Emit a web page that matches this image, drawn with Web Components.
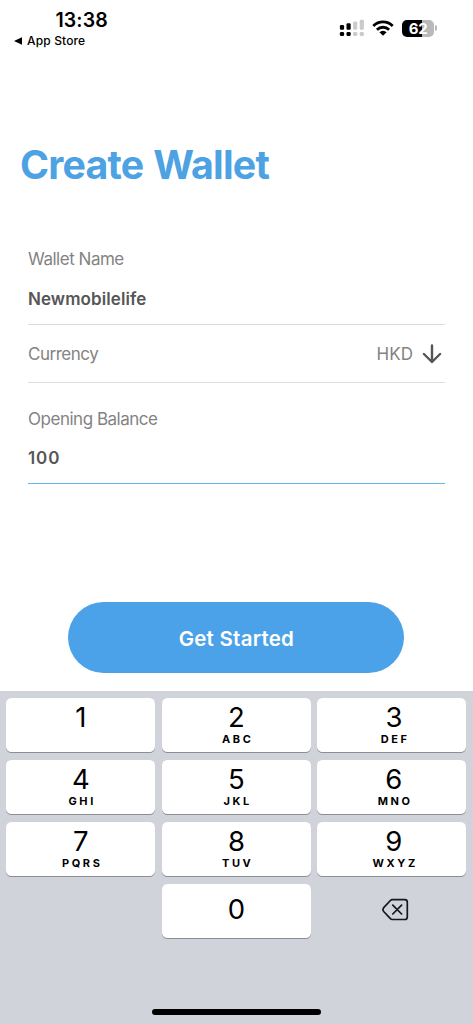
<!DOCTYPE html>
<html lang="en">
<head>
<meta charset="utf-8">
<title>Create Wallet</title>
<style>
html,body{margin:0;padding:0;background:#fff}
body{font-family:Inter,"Liberation Sans",sans-serif;width:473px;height:1024px;overflow:hidden}
</style>
</head>
<body>
<wallet-screen></wallet-screen>
<script>
const define = (name, html) => customElements.define(name, class extends HTMLElement {
  constructor() {
    super();
    this.attachShadow({mode: 'open'}).innerHTML = html;
  }
});

define('status-bar', `
<style>
:host{display:flex;justify-content:space-between;height:130px;box-sizing:border-box;padding:9px 36px 0 14px;color:#000}
.time{font-size:19.5px;font-weight:600;line-height:22px;margin-left:41.5px;letter-spacing:.1px}
.back{display:flex;align-items:center;gap:5px;font-size:12px;font-weight:500;line-height:16px;margin-top:2px;letter-spacing:.15px}
.icons{display:flex;align-items:center;height:18px;margin-top:10px}
svg{display:block}
.wifi{margin-left:8px}
.battery{display:flex;align-items:center;margin-left:8px}
.body{width:32px;height:17px;border-radius:5px;background:linear-gradient(90deg,#000 20px,#b9b9b9 20px);color:#fff;font-size:15px;font-weight:700;line-height:17px;text-align:center;letter-spacing:-.3px}
.cap{width:2px;height:6px;border-radius:0 2px 2px 0;background:#b9b9b9;margin-left:1px}
</style>
<div>
  <div class="time">13:38</div>
  <div class="back"><svg width="8" height="8" viewBox="0 0 8 8"><path d="M0 4L8 .2V7.8Z"/></svg><span>App Store</span></div>
</div>
<div class="icons">
  <svg width="25" height="18" viewBox="0 0 25 18">
    <rect x=".9" y="6" width="4.2" height="4.8" rx="1.2"/><rect x="7.5" y="4.2" width="4.2" height="6.6" rx="1.2"/>
    <rect x=".9" y="13" width="4.2" height="4" rx="1.2"/><rect x="7.5" y="13" width="4.2" height="4" rx="1.2"/>
    <g fill="#cbcbcb"><rect x="14.1" y="2.5" width="4.2" height="8.3" rx="1.2"/><rect x="20.7" y=".8" width="4.2" height="10" rx="1.2"/>
    <rect x="14.1" y="13" width="4.2" height="4" rx="1.2"/><rect x="20.7" y="13" width="4.2" height="4" rx="1.2"/></g>
  </svg>
  <svg class="wifi" width="22" height="16" viewBox="0 0 22 16" fill="none" stroke="#000" stroke-width="2.8">
    <path d="M1.3 5.9a13.8 13.8 0 0 1 19.4 0M4.9 9.7a8.8 8.8 0 0 1 12.2 0"/>
    <path d="M11 15.8L7.4 12.3a5 5 0 0 1 7.2 0Z" fill="#000" stroke="none"/>
  </svg>
  <div class="battery"><div class="body">62</div><div class="cap"></div></div>
</div>`);

define('form-row', `
<style>
:host{display:flex;flex-direction:column;box-sizing:border-box;border-bottom:1px solid #dcdcdc;color:#838383;font-size:17px;line-height:22px;letter-spacing:-.48px}
::slotted([slot=value]){margin-top:18px;color:#565656;font-weight:600;letter-spacing:.08px}
:host([inline]){flex-direction:row;justify-content:space-between;align-items:center}
:host([inline]) ::slotted([slot=value]){margin-top:0;color:#838383;font-weight:400;display:flex;align-items:center;gap:8px;margin-right:2px}
:host([active]){border-bottom:1px solid #62b6ea}
:host([active]) ::slotted([slot=value]){margin-top:17px;letter-spacing:.9px}
</style>
<slot></slot><slot name="value"></slot>`);

define('primary-button', `
<style>
:host{display:block}
button{display:block;width:100%;height:100%;border:0;padding:1px 0 0;border-radius:36px;background:#4ca2e8;color:#fff;font:600 20.5px/71px Inter,"Liberation Sans",sans-serif;letter-spacing:.25px}
</style>
<button><slot></slot></button>`);

define('number-key', `
<style>
:host{display:flex;flex-direction:column;align-items:center;box-sizing:border-box;height:54px;padding-top:4px;border-radius:5.5px;background:#fff;box-shadow:0 1px 0 #8d8e93;color:#000;font-size:27.5px;line-height:31px}
:host([single]){padding-top:10px}
::slotted(span){font-size:11px;line-height:13px;font-weight:700;letter-spacing:2.6px;margin-right:-2.6px}
:host([plain]){background:none;box-shadow:none;justify-content:center;padding:0}
</style>
<slot></slot><slot name="letters"></slot>`);

define('number-pad', `
<style>
:host{display:block;box-sizing:border-box;height:333px;padding:7px 0 0;background:#d1d3db}
.keys{display:grid;grid-template-columns:repeat(3,149px);gap:8px 6.5px;margin-left:6.4px}
number-key:nth-of-type(10){grid-column:2}
number-key:nth-of-type(3n):not([plain]){padding-left:4px}
.home{width:169px;height:6px;border-radius:3px;background:#000;margin:71px auto 0}
</style>
<div class="keys">
<number-key>1</number-key>
<number-key>2<span slot="letters">ABC</span></number-key>
<number-key>3<span slot="letters">DEF</span></number-key>
<number-key>4<span slot="letters">GHI</span></number-key>
<number-key>5<span slot="letters">JKL</span></number-key>
<number-key>6<span slot="letters">MNO</span></number-key>
<number-key>7<span slot="letters">PQRS</span></number-key>
<number-key>8<span slot="letters">TUV</span></number-key>
<number-key>9<span slot="letters">WXYZ</span></number-key>
<number-key single>0</number-key>
<number-key plain><svg width="27" height="24" viewBox="0 0 27 24" fill="none" stroke="#15171b" stroke-width="1.7" stroke-linejoin="round" stroke-linecap="round" style="margin-left:8px;margin-bottom:2px"><path d="M10.2 1.7H22.8Q25.3 1.7 25.3 4.2V19Q25.3 21.5 22.8 21.5H10.2Q9.2 21.5 8.4 20.7L1.7 13.5Q.2 11.6 1.7 9.7L8.4 2.5Q9.2 1.7 10.2 1.7ZM10.8 7.2L19.6 16M19.6 7.2L10.8 16"/></svg></number-key>
</div>
<div class="home"></div>`);

define('wallet-screen', `
<style>
:host{display:flex;flex-direction:column;width:473px;height:1024px;background:#fff}
h1{margin:10px 0 0 20px;height:50px;font-size:39.3px;line-height:50px;font-weight:700;letter-spacing:-.8px;word-spacing:1.5px;color:#4ca2e3}
.form{margin:58px 28px 0;display:flex;flex-direction:column}
.name{height:77px}.currency{height:58px}.balance{height:101px;padding-top:25px}
primary-button{width:336px;height:71px;margin:118px 0 18px 68.4px}
</style>
<status-bar></status-bar>
<h1>Create Wallet</h1>
<div class="form">
  <form-row class="name"><span>Wallet Name</span><span slot="value">Newmobilelife</span></form-row>
  <form-row class="currency" inline><span>Currency</span><span slot="value"><span>HKD</span><svg width="22" height="20" viewBox="0 0 22 20" fill="none" stroke="#565656" stroke-width="2.4" stroke-linecap="round" stroke-linejoin="round"><path d="M11 1.5V18M2.9 10L11 18L19.1 10"/></svg></span></form-row>
  <form-row class="balance" active><span>Opening Balance</span><span slot="value">100</span></form-row>
</div>
<primary-button>Get Started</primary-button>
<number-pad></number-pad>`);
</script>
</body>
</html>
